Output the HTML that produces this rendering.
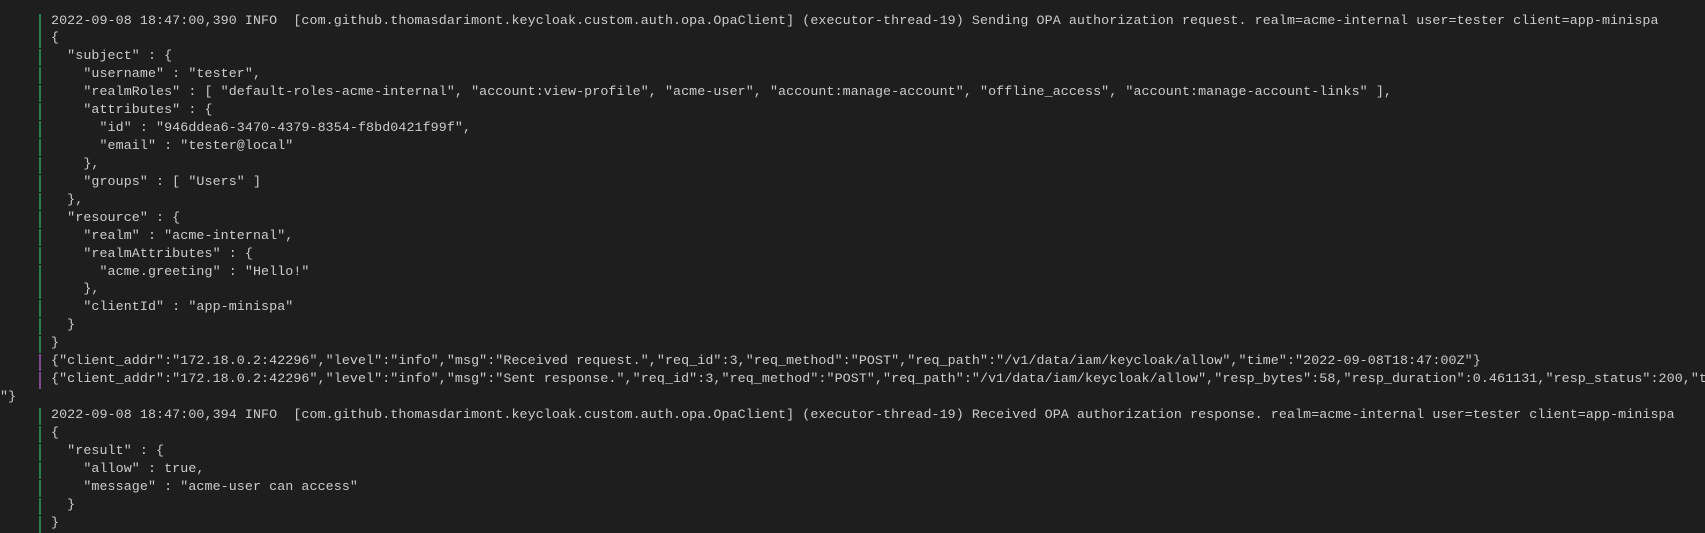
<!DOCTYPE html>
<html><head><meta charset="utf-8"><style>
html,body{margin:0;padding:0;background:#1e1e1e;width:1705px;height:530px;overflow:hidden}
.r{position:absolute;left:0;height:18px;line-height:18px;font-family:"Liberation Mono",monospace;font-size:13.33px;letter-spacing:0.08px;color:#cccccc;white-space:pre}
.r span.b{position:absolute;left:39px;top:1px;width:2px;height:17px;background:#2a7a4c}
.r.p span.b{background:#7d4a90}
.r span.t{position:absolute;left:51px}
</style></head><body>
<div id="c"></div>
<script>
var L=[
["g","2022-09-08 18:47:00,390 INFO  [com.github.thomasdarimont.keycloak.custom.auth.opa.OpaClient] (executor-thread-19) Sending OPA authorization request. realm=acme-internal user=tester client=app-minispa"],
["g","{"],
["g","  \"subject\" : {"],
["g","    \"username\" : \"tester\","],
["g","    \"realmRoles\" : [ \"default-roles-acme-internal\", \"account:view-profile\", \"acme-user\", \"account:manage-account\", \"offline_access\", \"account:manage-account-links\" ],"],
["g","    \"attributes\" : {"],
["g","      \"id\" : \"946ddea6-3470-4379-8354-f8bd0421f99f\","],
["g","      \"email\" : \"tester@local\""],
["g","    },"],
["g","    \"groups\" : [ \"Users\" ]"],
["g","  },"],
["g","  \"resource\" : {"],
["g","    \"realm\" : \"acme-internal\","],
["g","    \"realmAttributes\" : {"],
["g","      \"acme.greeting\" : \"Hello!\""],
["g","    },"],
["g","    \"clientId\" : \"app-minispa\""],
["g","  }"],
["g","}"],
["p","{\"client_addr\":\"172.18.0.2:42296\",\"level\":\"info\",\"msg\":\"Received request.\",\"req_id\":3,\"req_method\":\"POST\",\"req_path\":\"/v1/data/iam/keycloak/allow\",\"time\":\"2022-09-08T18:47:00Z\"}"],
["p","{\"client_addr\":\"172.18.0.2:42296\",\"level\":\"info\",\"msg\":\"Sent response.\",\"req_id\":3,\"req_method\":\"POST\",\"req_path\":\"/v1/data/iam/keycloak/allow\",\"resp_bytes\":58,\"resp_duration\":0.461131,\"resp_status\":200,\"time\":\"2022-09-08T18:47:00Z\"}"],
["n","\"}"],
["g","2022-09-08 18:47:00,394 INFO  [com.github.thomasdarimont.keycloak.custom.auth.opa.OpaClient] (executor-thread-19) Received OPA authorization response. realm=acme-internal user=tester client=app-minispa"],
["g","{"],
["g","  \"result\" : {"],
["g","    \"allow\" : true,"],
["g","    \"message\" : \"acme-user can access\""],
["g","  }"],
["g","}"]];
var c=document.getElementById('c'),h='';
function e(s){return s.replace(/&/g,'&amp;').replace(/</g,'&lt;')}
L.forEach(function(l,i){var top=(12.5+i*17.93).toFixed(2);
if(l[0]=='n'){h+='<div class="r" style="top:'+top+'px"><span style="position:absolute;left:0">'+e(l[1])+'</span></div>';return;}
h+='<div class="r '+l[0]+'" style="top:'+top+'px;width:1705px;overflow:hidden"><span class="b"></span><span class="t">'+e(l[1])+'</span></div>';});
c.innerHTML=h;
</script>
</body></html>
